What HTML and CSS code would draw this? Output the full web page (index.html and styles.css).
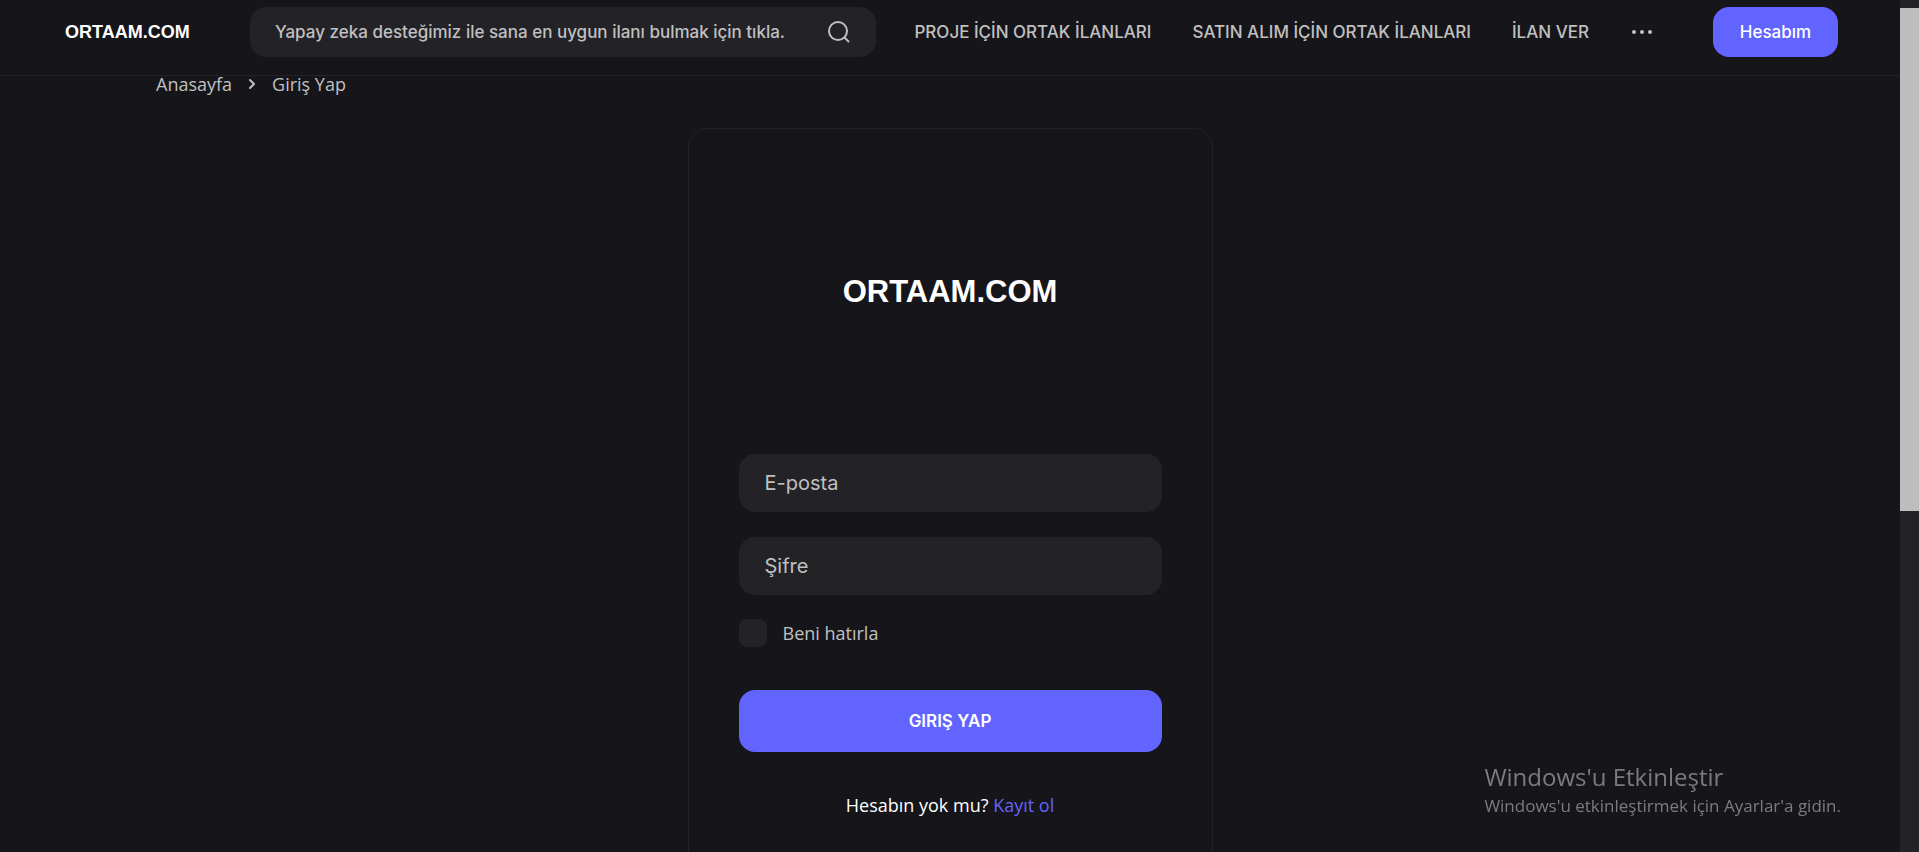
FILE: index.html
```
<!DOCTYPE html>
<html lang="tr">
<head>
    <meta charset="UTF-8">
    <meta name="viewport" content="width=device-width, initial-scale=1.0">
    <title>Giriş Yap - ORTAAM.COM</title>
    <link rel="stylesheet" href="styles.css">
</head>
<body>
    <div class="page">
        <header class="header">
            <a href="#" class="header-logo">ORTAAM.COM</a>
            <form class="search">
                <input type="text" class="search-input" aria-label="Ara" placeholder="Yapay zeka desteğimiz ile sana en uygun ilanı bulmak için tıkla.">
                <button type="button" class="search-button" aria-label="Ara">
                    <svg width="24" height="24" viewBox="0 0 24 24" fill="none" stroke="currentColor" stroke-width="2" stroke-linecap="round">
                        <circle cx="11" cy="11" r="9"/>
                        <path d="M17.5 17.5L21.5 21.5"/>
                    </svg>
                </button>
            </form>
            <nav class="nav">
                <a href="#">PROJE İÇİN ORTAK İLANLARI</a>
                <a href="#">SATIN ALIM İÇİN ORTAK İLANLARI</a>
                <a href="#">İLAN VER</a>
                <button type="button" class="more-button" aria-label="Daha fazla">
                    <svg width="24" height="24" viewBox="0 0 24 24" fill="currentColor">
                        <circle cx="4" cy="12" r="2"/>
                        <circle cx="12" cy="12" r="2"/>
                        <circle cx="20" cy="12" r="2"/>
                    </svg>
                </button>
            </nav>
            <a href="#" class="account-button">Hesabım</a>
        </header>

        <main>
            <ul class="breadcrumb">
                <li><a href="#">Anasayfa</a></li>
                <li class="breadcrumb-arrow">
                    <svg width="8" height="12" viewBox="0 0 8 12" fill="none" stroke="currentColor" stroke-width="2" stroke-linecap="round" stroke-linejoin="round">
                        <path d="M2 2L6 6L2 10"/>
                    </svg>
                </li>
                <li>Giriş Yap</li>
            </ul>

            <form class="login-card">
                <a href="#" class="login-logo">ORTAAM.COM</a>
                <input type="email" class="login-input" aria-label="E-posta" placeholder="E-posta">
                <input type="password" class="login-input" aria-label="Şifre" placeholder="Şifre">
                <div class="remember">
                    <input type="checkbox" id="remember">
                    <label for="remember">Beni hatırla</label>
                </div>
                <button type="button" class="login-button">GIRIŞ YAP</button>
                <p class="register">Hesabın yok mu? <a href="#">Kayıt ol</a></p>
            </form>
        </main>
    </div>

    <div class="scrollbar">
        <div class="scrollbar-thumb"></div>
    </div>

    <div class="activation">
        <p class="activation-title">Windows'u Etkinleştir</p>
        <p class="activation-text">Windows'u etkinleştirmek için Ayarlar'a gidin.</p>
    </div>
</body>
</html>
```
FILE: styles.css
```
* {
    box-sizing: border-box;
}
body {
    font-family: "Open Sans", sans-serif;
    font-size: 18px;
    background: #16151a;
    color: #fff;
    margin: 0;
    height: 100vh;
    display: flex;
    overflow: hidden;
}
a {
    color: inherit;
    text-decoration: none;
}
button, input {
    font-family: Inter, sans-serif;
    border: none;
    margin: 0;
}
button {
    cursor: pointer;
}
p {
    margin: 0;
}
.page {
    flex: 1;
    min-width: 0;
    height: 100vh;
    overflow: hidden;
}

/* header */
.header {
    display: flex;
    align-items: center;
    font-family: Inter, sans-serif;
    font-size: 17px;
    font-weight: 500;
    padding: 7px 62px 18px 65px;
    border-bottom: 1px solid #222227;
}
.header-logo {
    width: 185px;
    font-family: "Liberation Sans", Arial, sans-serif;
    font-size: 18px;
    font-weight: bold;
}
.search {
    display: flex;
    align-items: center;
    flex: 1;
    height: 50px;
    padding: 0 25px;
    background: #222227;
    border-radius: 16px;
}
.search-input {
    flex: 1;
    min-width: 0;
    padding: 0;
    background: transparent;
    color: #fff;
    font-size: 17px;
    font-weight: 500;
}
.search-input::placeholder, .login-input::placeholder {
    color: #c0c0c0;
    opacity: 1;
}
.search-button, .more-button {
    display: flex;
    padding: 0;
    background: transparent;
    color: #c0c0c0;
}
.nav {
    display: flex;
    align-items: center;
    gap: 41px;
    margin: 0 59px 0 38px;
    color: #c0c0c0;
    white-space: nowrap;
}
.account-button {
    width: 125px;
    height: 50px;
    line-height: 50px;
    text-align: center;
    background: #6164ff;
    border-radius: 16px;
}

/* breadcrumb */
.breadcrumb {
    display: flex;
    align-items: center;
    list-style: none;
    margin: 0;
    padding: 0 156px;
    height: 16px;
    line-height: 16px;
    color: #c0c0c0;
}
.breadcrumb-arrow {
    display: flex;
    margin: 0 16px;
}

/* login form */
.login-card {
    display: flex;
    flex-direction: column;
    width: 525px;
    margin: 36px auto 0;
    padding: 50px;
    border: 1px solid #222227;
    border-radius: 20px;
}
.login-logo {
    height: 225px;
    margin-bottom: 50px;
    line-height: 225px;
    text-align: center;
    font-family: "Liberation Sans", Arial, sans-serif;
    font-size: 31px;
    font-weight: bold;
}
.login-input {
    height: 58px;
    margin-bottom: 25px;
    padding: 0 26px;
    background: #222227;
    border-radius: 16px;
    color: #fff;
    font-size: 20px;
}
.remember {
    display: flex;
    align-items: center;
    height: 26px;
    color: #c0c0c0;
}
.remember input {
    appearance: none;
    width: 28px;
    height: 28px;
    margin-right: 16px;
    background: #222227;
    border-radius: 8px;
}
.login-button {
    height: 62px;
    margin: 44px 0;
    background: #6164ff;
    border-radius: 16px;
    color: #fff;
    font-size: 17px;
    font-weight: 600;
}
.register {
    line-height: 18px;
    padding-bottom: 100px;
    text-align: center;
}
.register a {
    color: #6164ff;
}

/* scrollbar */
.scrollbar {
    width: 19px;
    padding-top: 8px;
    background: #222227;
}
.scrollbar-thumb {
    height: 59vh;
    background: #bdbdbd;
}

/* activation notice */
.activation {
    position: fixed;
    right: 78px;
    bottom: 34px;
    color: #7c7c7c;
    pointer-events: none;
}
.activation-title {
    font-size: 24px;
    line-height: 34px;
}
.activation-text {
    font-size: 17px;
    line-height: 24px;
}
```
